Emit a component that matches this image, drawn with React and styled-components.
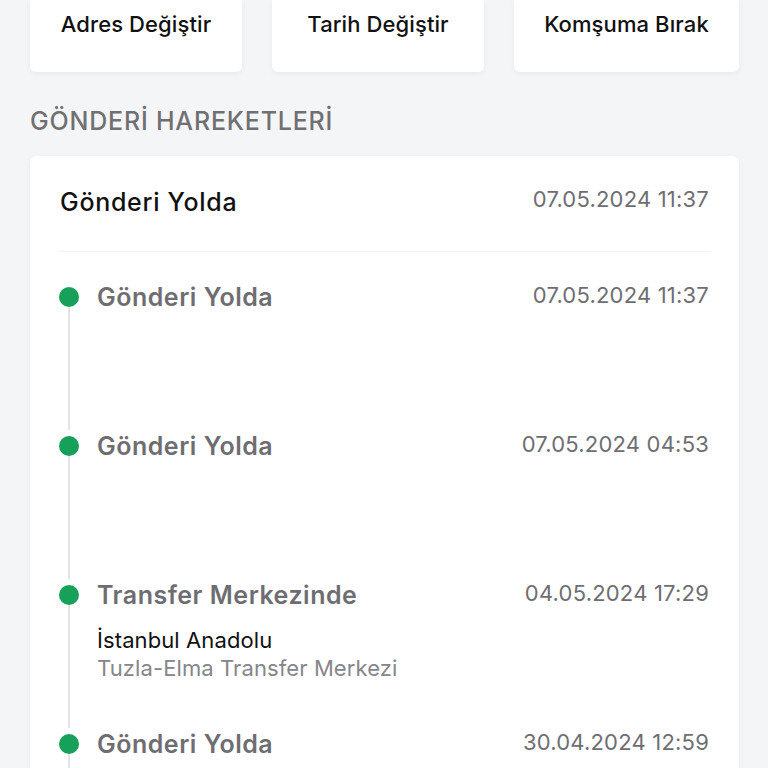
import styled, { createGlobalStyle } from "styled-components";

const GlobalStyle = createGlobalStyle`
  body {
    margin: 0;
    background: #f4f5f7;
    font-family: Inter, "Noto Sans", sans-serif;
  }
`;

const Page = styled.div`
  padding: 0 29px 0 30px;
`;

const Actions = styled.div`
  display: flex;
  gap: 30px;
`;

const ActionButton = styled.div`
  flex: ${(p) => p.grow || 212} 1 0;
  height: 72px;
  box-sizing: border-box;
  padding-top: 9px;
  background: #fff;
  border-radius: 0 0 6px 6px;
  box-shadow: 0 2px 6px rgba(0, 0, 0, 0.05);
  text-align: center;
  font-size: 22px;
  font-weight: 500;
  line-height: 30px;
  color: #111;
  letter-spacing: 0.1px;
`;

const SectionTitle = styled.h2`
  margin: 34px 0 20px;
  font-size: 25px;
  font-weight: 500;
  line-height: 30px;
  color: #707073;
  letter-spacing: 0.8px;
`;

const Card = styled.div`
  background: #fff;
  border-radius: 7px 7px 0 0;
  padding: 0 29px 0 29px;
  box-shadow: 0 2px 6px rgba(0, 0, 0, 0.04);
`;

const Header = styled.div`
  display: flex;
  justify-content: space-between;
  align-items: flex-start;
  padding: 29px 1px 31px 1px;
  border-bottom: 1px solid #f1f1f3;
`;

const HeaderTitle = styled.div`
  font-size: 25px;
  font-weight: 500;
  line-height: 35px;
  color: #111;
  letter-spacing: 0.7px;
`;

const DateText = styled.div`
  font-size: 22px;
  line-height: 28px;
  color: #6e6e72;
  letter-spacing: 0.2px;
`;

const Timeline = styled.div`
  padding-top: 29px;
`;

const Item = styled.div`
  display: flex;
  height: 149px;
`;

const Rail = styled.div`
  width: 20px;
  display: flex;
  flex-direction: column;
  align-items: center;
  margin-right: 18px;
`;

const Dot = styled.div`
  width: 20px;
  height: 20px;
  border-radius: 50%;
  background: #17a05a;
  margin-top: 6px;
  flex-shrink: 0;
`;

const Line = styled.div`
  flex: 1;
  width: 2px;
  background: #e3e3e6;
`;

const Content = styled.div`
  flex: 1;
`;

const Row = styled.div`
  display: flex;
  justify-content: space-between;
  align-items: flex-start;
`;

const ItemTitle = styled.div`
  font-size: 25px;
  font-weight: 600;
  line-height: 32px;
  color: #6e6e72;
  letter-spacing: 0.5px;
`;

const ItemDate = styled(DateText)`
  margin-right: 1px;
`;

const Place = styled.div`
  margin-top: 15px;
  font-size: 22px;
  line-height: 28px;
  color: #111;
  letter-spacing: 0.1px;
`;

const PlaceSub = styled.div`
  font-size: 22px;
  line-height: 28px;
  color: #86868a;
  letter-spacing: 0.1px;
`;

const events = [
  { title: "Gönderi Yolda", date: "07.05.2024 11:37" },
  { title: "Gönderi Yolda", date: "07.05.2024 04:53" },
  {
    title: "Transfer Merkezinde",
    date: "04.05.2024 17:29",
    place: "İstanbul Anadolu",
    sub: "Tuzla-Elma Transfer Merkezi",
  },
  { title: "Gönderi Yolda", date: "30.04.2024 12:59" },
];

const App = () => {
  return (
    <Page>
      <GlobalStyle />
      <Actions>
        <ActionButton>Adres Değiştir</ActionButton>
        <ActionButton>Tarih Değiştir</ActionButton>
        <ActionButton grow={225}>Komşuma Bırak</ActionButton>
      </Actions>
      <SectionTitle>GÖNDERİ HAREKETLERİ</SectionTitle>
      <Card>
        <Header>
          <HeaderTitle>Gönderi Yolda</HeaderTitle>
          <DateText>07.05.2024 11:37</DateText>
        </Header>
        <Timeline>
          {events.map((e, i) => (
            <Item key={i}>
              <Rail>
                <Dot />
                <Line />
              </Rail>
              <Content>
                <Row>
                  <ItemTitle>{e.title}</ItemTitle>
                  <ItemDate>{e.date}</ItemDate>
                </Row>
                {e.place && <Place>{e.place}</Place>}
                {e.sub && <PlaceSub>{e.sub}</PlaceSub>}
              </Content>
            </Item>
          ))}
        </Timeline>
      </Card>
    </Page>
  );
};

export default App;
